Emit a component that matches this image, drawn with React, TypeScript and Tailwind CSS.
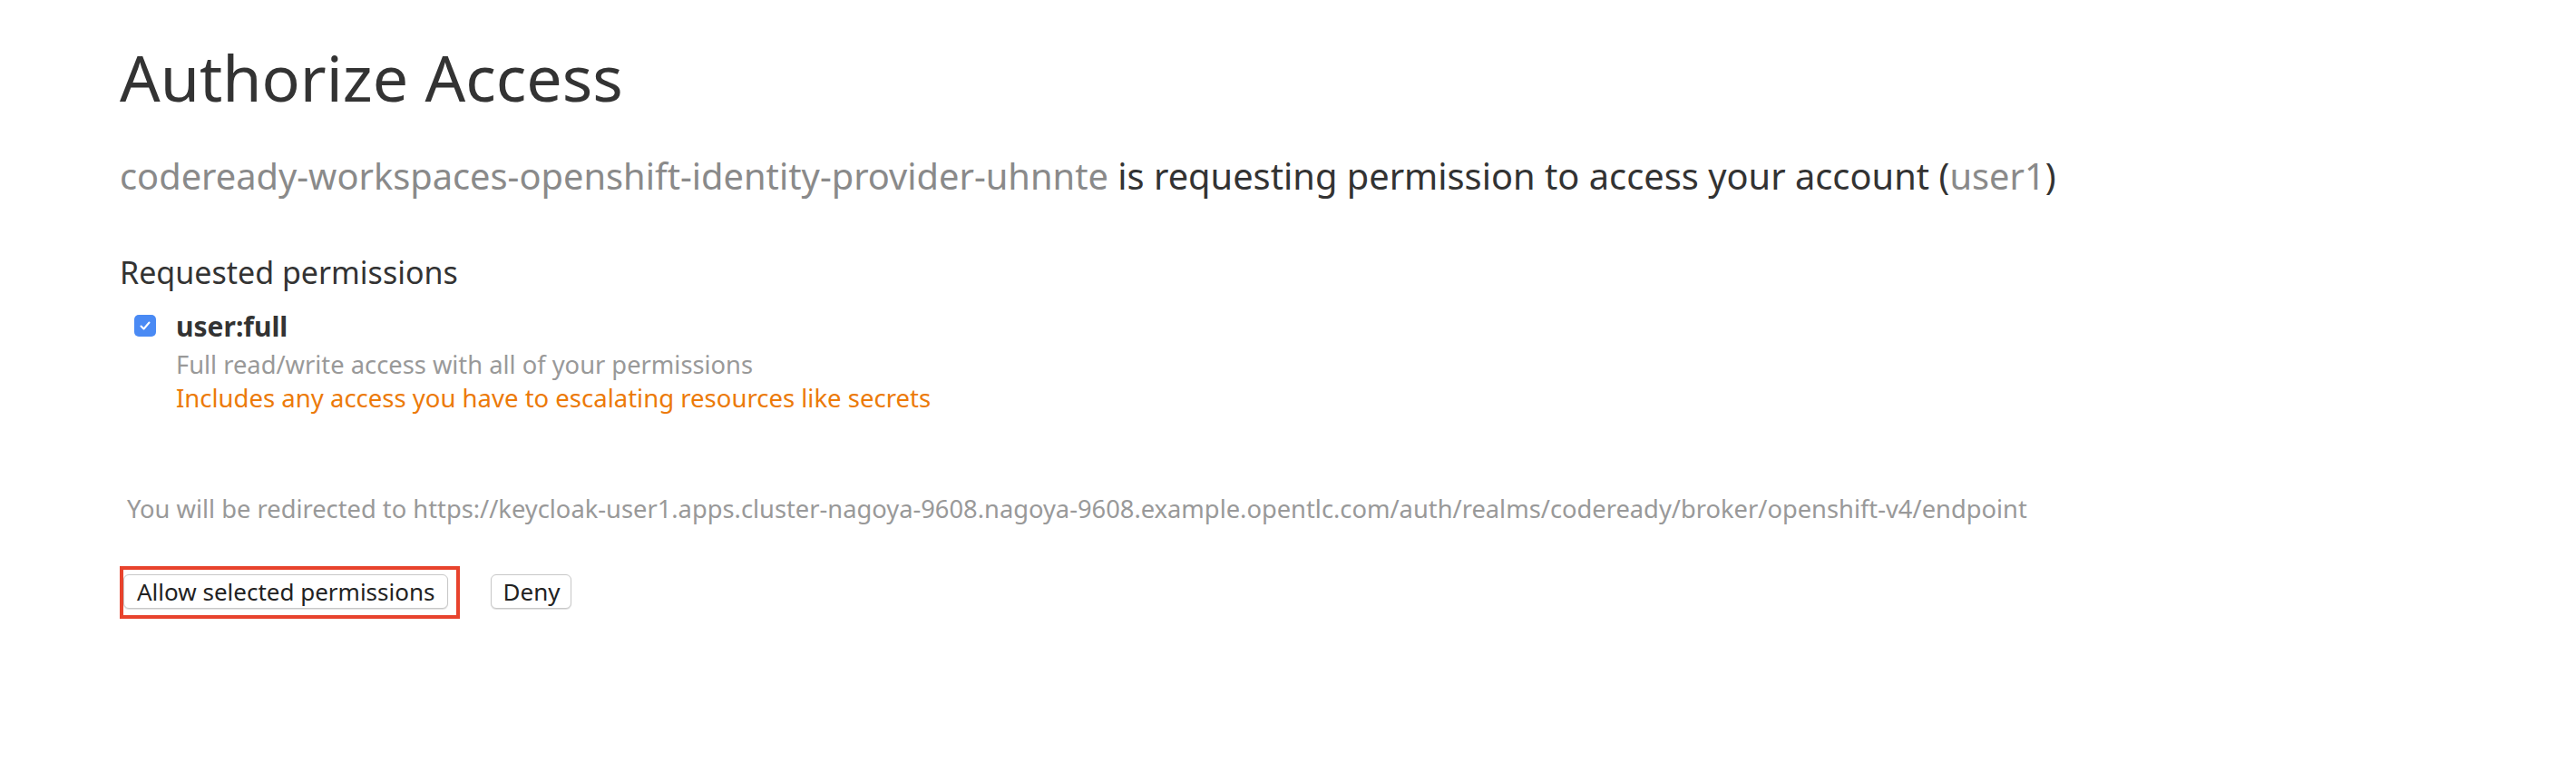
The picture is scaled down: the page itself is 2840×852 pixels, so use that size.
export default function App() {
  return (
    <div className="min-h-screen w-full bg-white font-['Noto_Sans',sans-serif] text-[#333]">
      <div className="flex flex-col items-start pl-[132px] pt-[50px]">
        <h1 className="text-[70px] leading-none font-normal text-[#333]">Authorize Access</h1>

        <p className="mt-[54px] text-[39.8px] leading-none text-[#333]">
          <span className="text-[#8a8a8a]">codeready-workspaces-openshift-identity-provider-uhnnte</span> is
          requesting permission to access your account (<span className="text-[#8a8a8a]">user1</span>)
        </p>

        <h3 className="mt-[69px] text-[34px] leading-none text-[#333]">Requested permissions</h3>

        <div className="mt-[28px] ml-[16px] flex items-start gap-[22px]">
          <span className="mt-[2px] flex h-[24px] w-[24px] items-center justify-center rounded-[5px] bg-[#4a8af4]">
            <svg viewBox="0 0 16 16" className="h-[16px] w-[16px]" fill="none">
              <path d="M3.5 8.5l3 3 6-7" stroke="white" strokeWidth="2" strokeLinecap="round" strokeLinejoin="round" />
            </svg>
          </span>
          <div className="flex flex-col">
            <span className="text-[30px] leading-none font-bold text-[#333]">user:full</span>
            <span className="mt-[13px] text-[27.3px] leading-none text-[#999]">
              Full read/write access with all of your permissions
            </span>
            <span className="mt-[10px] text-[27.5px] leading-none text-[#ec7a08]">
              Includes any access you have to escalating resources like secrets
            </span>
          </div>
        </div>

        <p className="mt-[94px] ml-[8px] text-[27.3px] leading-none text-[#999]">
          You will be redirected to
          https://keycloak-user1.apps.cluster-nagoya-9608.nagoya-9608.example.opentlc.com/auth/realms/codeready/broker/openshift-v4/endpoint
        </p>

        <div className="mt-[50px] flex items-start">
          <div className="border-[4px] border-[#e8432d] pt-[5px] pr-[9px] pb-[7px]">
            <button className="h-[38px] rounded-[6px] border border-[#c8c8c8] bg-white px-[14px] text-[26px] leading-none text-[#222] shadow-[0_1px_1px_rgba(0,0,0,0.12)]">
              Allow selected permissions
            </button>
          </div>
          <button className="mt-[9px] ml-[34px] h-[38px] rounded-[6px] border border-[#c8c8c8] bg-white px-[12px] text-[26px] leading-none text-[#222] shadow-[0_1px_1px_rgba(0,0,0,0.12)]">
            Deny
          </button>
        </div>
      </div>
    </div>
  );
}
